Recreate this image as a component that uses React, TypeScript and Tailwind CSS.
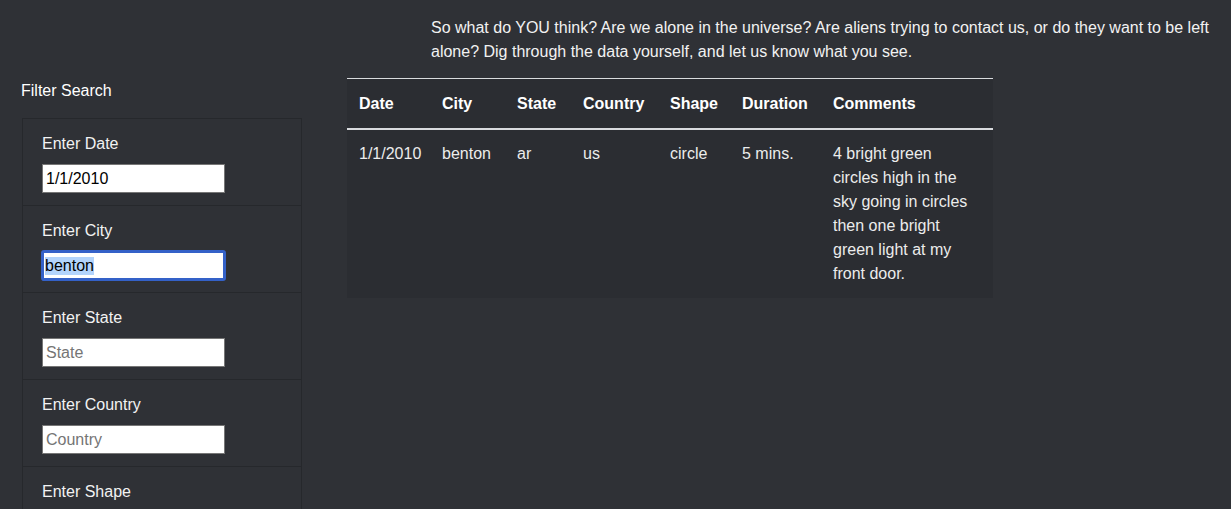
import { useEffect, useRef } from 'react'

const rows = [
  {
    date: '1/1/2010',
    city: 'benton',
    state: 'ar',
    country: 'us',
    shape: 'circle',
    duration: '5 mins.',
    comments: '4 bright green circles high in the sky going in circles then one bright green light at my front door.',
  },
]

const cols = [
  { key: 'date', label: 'Date', w: 'w-[83px]' },
  { key: 'city', label: 'City', w: 'w-[75px]' },
  { key: 'state', label: 'State', w: 'w-[66px]' },
  { key: 'country', label: 'Country', w: 'w-[87px]' },
  { key: 'shape', label: 'Shape', w: 'w-[72px]' },
  { key: 'duration', label: 'Duration', w: 'w-[91px]' },
  { key: 'comments', label: 'Comments', w: 'w-[172px]' },
] as const

const filters = [
  { id: 'datetime', label: 'Enter Date', placeholder: '1/1/2010', value: '1/1/2010' },
  { id: 'city', label: 'Enter City', placeholder: 'City', value: 'benton', focused: true },
  { id: 'state', label: 'Enter State', placeholder: 'State' },
  { id: 'country', label: 'Enter Country', placeholder: 'Country' },
  { id: 'shape', label: 'Enter Shape', placeholder: 'Shape' },
]

function FilterInput({ id, placeholder, value, focused }: { id: string; placeholder: string; value?: string; focused?: boolean }) {
  const ref = useRef<HTMLInputElement>(null)

  useEffect(() => {
    if (focused && ref.current) {
      ref.current.focus()
      ref.current.select()
    }
  }, [focused])

  if (focused) {
    return (
      <input
        ref={ref}
        id={id}
        type="text"
        defaultValue={value}
        placeholder={placeholder}
        className="-my-px -ml-px block h-[31px] w-[185px] rounded-[3px] border-[3px] border-[#3461c8] bg-white px-[1px] text-[16px] text-black outline-none selection:bg-[#b3d4fc] selection:text-black"
      />
    )
  }

  return (
    <input
      id={id}
      type="text"
      defaultValue={value}
      placeholder={placeholder}
      className="block h-[29px] w-[183px] border border-[#767676] bg-white px-[3px] text-[16px] text-black outline-none placeholder:text-[#757575]"
    />
  )
}

export default function App() {
  return (
    <div className="min-h-[509px] bg-[#2f3136] text-white font-['Liberation_Sans',Arial,sans-serif] text-[16px] leading-6">
      <p className="ml-[431px] w-[800px] pt-4 text-[#f2f2f2]">
        So what do YOU think? Are we alone in the universe? Are aliens trying to contact us, or do they want to be left
        alone? Dig through the data yourself, and let us know what you see.
      </p>

      <div className="mt-[14px] flex">
        <aside className="ml-[21px] w-[281px] shrink-0">
          <h5 className="pt-px text-[16px] leading-6 font-normal">Filter Search</h5>
          <ul className="mt-[15px] ml-px border border-b-0 border-[#26282c]">
            {filters.map((f) => (
              <li key={f.id} className="border-b border-[#26282c] pt-[13px] pb-3 pl-[19px] pr-5">
                <label htmlFor={f.id} className="mb-2 block leading-6 text-[#f2f2f2]">
                  {f.label}
                </label>
                <FilterInput id={f.id} placeholder={f.placeholder} value={f.value} focused={f.focused} />
              </li>
            ))}
          </ul>
        </aside>

        <div className="ml-[45px]">
          <table className="w-[646px] table-fixed border-collapse bg-[#2b2d32] text-left">
            <thead>
              <tr>
                {cols.map((c) => (
                  <th key={c.key} className={`${c.w} border-t border-b-2 border-t-[#d9dbde] border-b-[#d9dbde] px-3 pt-[13px] pb-3 align-bottom font-bold`}>
                    {c.label}
                  </th>
                ))}
              </tr>
            </thead>
            <tbody>
              {rows.map((r, i) => (
                <tr key={i}>
                  {cols.map((c) => (
                    <td key={c.key} className="p-3 align-top text-[#ececec]">
                      {r[c.key]}
                    </td>
                  ))}
                </tr>
              ))}
            </tbody>
          </table>
        </div>
      </div>
    </div>
  )
}
